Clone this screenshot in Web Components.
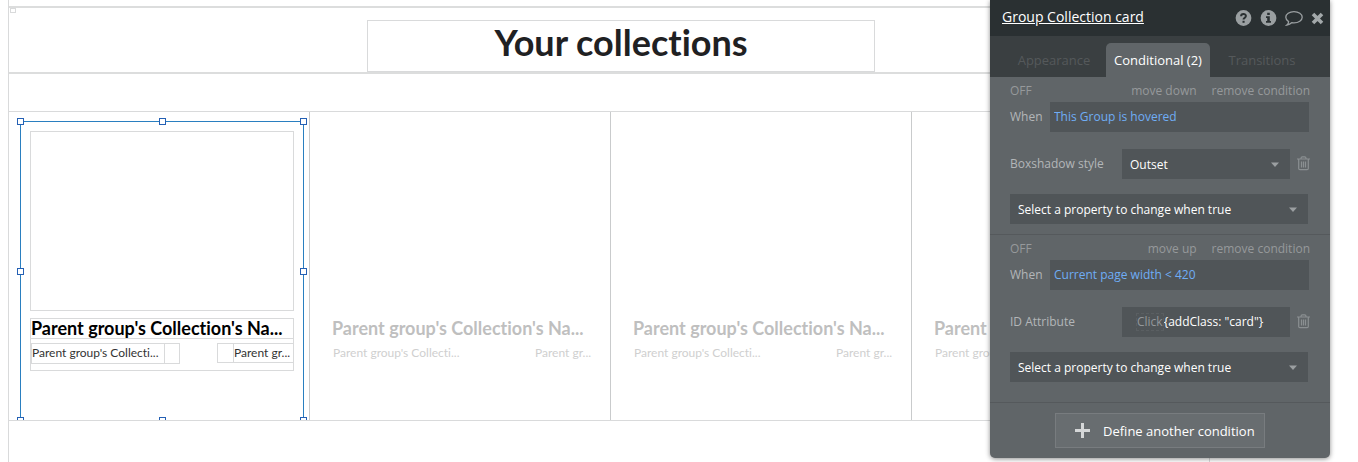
<!DOCTYPE html>
<html lang="en">
<head>
<meta charset="utf-8">
<title>Your collections – editor</title>
<style>
  html, body { margin: 0; height: 100%; }
  body { background: #fff; font-family: "Open Sans", sans-serif; font-variant-ligatures: none; overflow: hidden; }
</style>
</head>
<body>
<editor-app></editor-app>

<script>
const define = (name, html, init) => {
  const template = document.createElement('template');
  template.innerHTML = '<style>*{box-sizing:border-box}</style>' + html;
  customElements.define(name, class extends HTMLElement {
    constructor() {
      super();
      this.attachShadow({ mode: 'open' }).append(template.content.cloneNode(true));
    }
    connectedCallback() { if (init) init(this, this.shadowRoot); }
  });
};

/* One repeating-group cell with its card */
define('collection-card', `
  <style>
    :host { display: block; box-sizing: border-box; border-right: 1px solid #c9cbcc; padding: 19px 15px 0 21px; font-family: Lato, sans-serif; position: relative; }
    .image { height: 180px; border: 1px solid transparent; }
    .info { margin-top: 7px; height: 53px; border: 1px solid transparent; }
    h2 { margin: 0; height: 20px; border-bottom: 1px solid transparent; font-size: 18px; line-height: 19px; font-weight: 700; color: #bfbfbf; white-space: nowrap; }
    .row { display: flex; justify-content: space-between; margin-top: 4px; }
    .pair { display: flex; height: 21px; border: 1px solid transparent; }
    .pair.end { height: 20px; border-right: 0; }
    .text { font-size: 12px; line-height: 18px; color: #cfcfcf; white-space: nowrap; }
    .pair .text.wide { width: 133px; border-right: 1px solid transparent; }
    .pair .text.narrow { width: 60px; border-left: 1px solid transparent; }
    .icon { width: 14px; }
    .end .icon { width: 15px; }
    .frame { display: none; }
    :host([selected]) { padding-left: 21px; }
    :host([selected]) :is(.image, .info, h2, .pair, .text.wide, .text.narrow) { border-color: #d9dadb; }
    :host([selected]) h2 { color: #000; }
    :host([selected]) .text { color: #333; }
    :host([selected]) .frame { display: grid; grid-template-columns: 7px 1fr 7px 1fr 7px; grid-template-rows: 7px 1fr 7px 1fr 7px; position: absolute; inset: 6px 2px -4px 8px; }
    .outline { grid-area: 1 / 1 / 6 / 6; margin: 3px; border: 1px solid #2a7fc0; }
    .handle { width: 7px; height: 7px; background: #fff; border: 1px solid #2460b4; }
    .nw { grid-area: 1 / 1; } .n { grid-area: 1 / 3; } .ne { grid-area: 1 / 5; }
    .w { grid-area: 3 / 1; } .e { grid-area: 3 / 5; }
    .sw { grid-area: 5 / 1; } .s { grid-area: 5 / 3; } .se { grid-area: 5 / 5; }
  </style>
  <div class="image"></div>
  <div class="info">
    <h2>Parent group's Collection's Na...</h2>
    <div class="row">
      <div class="pair"><div class="text wide">Parent group's Collecti...</div><div class="icon"></div></div>
      <div class="pair end"><div class="icon"></div><div class="text narrow">Parent gr...</div></div>
    </div>
  </div>
  <div class="frame">
    <i class="outline"></i>
    <i class="handle nw"></i><i class="handle n"></i><i class="handle ne"></i>
    <i class="handle w"></i><i class="handle e"></i>
    <i class="handle sw"></i><i class="handle s"></i><i class="handle se"></i>
  </div>`);

define('design-canvas', `
  <style>
    :host { display: flex; flex-direction: column; min-height: 100vh; border: solid #d9dadb; border-width: 0 1px; box-sizing: border-box; }
    header { margin-top: 6px; height: 68px; border: solid #dcdddd; border-width: 2px 0; display: flex; }
    .marker { width: 6px; height: 5px; margin-left: 1px; border: 1px solid #d9dadb; flex: none; }
    .holder { flex: 1; display: flex; justify-content: center; padding: 12px 0 0 17px; }
    h1 { margin: 0; width: 508px; height: 52px; border: 1px solid #d9dadb; text-align: center; font-family: Lato, sans-serif; font-size: 36px; line-height: 43px; font-weight: 700; color: #1f2123; }
    .group { margin-top: 37px; height: 310px; border: solid #d9dadb; border-width: 1px 0; display: grid; grid-template-columns: repeat(4, 301px); overflow: hidden; }
  </style>
  <header><div class="marker"></div><div class="holder"><h1>Your collections</h1></div></header>
  <section class="group">
    <collection-card selected></collection-card>
    <collection-card></collection-card>
    <collection-card></collection-card>
    <collection-card></collection-card>
  </section>`);

/* Drop-down with the editor's dark styling */
define('dark-select', `
  <style>
    :host { display: grid; height: 30px; align-items: center; background: #505558; }
    select { grid-area: 1 / 1; width: 100%; height: 30px; appearance: none; border: 0; padding: 2px 24px 0 8px; background: none; color: #fff; font: 12px/28px "Open Sans", sans-serif; outline: 0; }
    svg { grid-area: 1 / 1; justify-self: end; margin-right: 11px; pointer-events: none; }
  </style>
  <select><option></option></select>
  <svg width="8" height="5" viewBox="0 0 8 5"><path d="M0 .5h8L4 5z" fill="#9b9fa1"/></svg>`,
  (host, root) => {
    root.querySelector('option').textContent = host.getAttribute('value');
    root.querySelector('select').setAttribute('aria-label', host.getAttribute('label') || host.getAttribute('value'));
  });

define('trash-button', `
  <style>
    :host { display: block; }
    button { display: block; border: 0; background: none; padding: 0; }
    svg { display: block; }
  </style>
  <button aria-label="Remove property"><svg width="13" height="15" viewBox="0 0 13 15" fill="none" stroke="#8b9092" stroke-width="1.200">
    <path d="M0 3h13M4 3V2.200Q4 .8 5.400.8H7.600Q9 .8 9 2.200V3M1.700 3.500V12.500q0 1.200 1.200 1.200h7.200q1.200 0 1.200-1.200V3.500M4.500 5.500v6M6.500 5.500v6M8.500 5.500v6"/>
  </svg></button>`);

define('condition-block', `
  <style>
    :host { display: block; padding: 0 20px 10px; border-bottom: 1px solid #55595c; color: #b3b6b8; font-size: 12px; }
    .meta { display: flex; height: 25px; padding-top: 2px; line-height: 24px; color: #96999b; }
    .meta span { flex: 1; }
    button { border: 0; background: none; padding: 0; margin-left: 15px; font: inherit; color: inherit; }
    .when { display: grid; grid-template-columns: 40px 1fr; align-items: center; margin-right: 1px; }
    label { padding-bottom: 2px; }
    input { width: 100%; min-width: 0; border: 0; outline: 0; font: 12px "Open Sans", sans-serif; }
    .when input { height: 30px; padding: 0 4px 2px; background: #505558; color: #6fadf5; }
    ::slotted([slot=property]) { margin-top: 17px; }
    ::slotted([slot=next]) { margin-top: 15px; margin-right: 2px; }
  </style>
  <div class="meta"><span>OFF</span><button class="move"></button><button>remove condition</button></div>
  <div class="when"><label for="expr">When</label><input id="expr"></div>
  <slot name="property"></slot>
  <slot name="next"></slot>`,
  (host, root) => {
    root.querySelector('.move').textContent = host.getAttribute('move');
    root.querySelector('input').value = host.getAttribute('when');
  });

define('property-row', `
  <style>
    :host { display: grid; grid-template-columns: 112px minmax(0, 1fr) 13px; align-items: center; height: 30px; color: #b3b6b8; font-size: 12px; }
    .name, trash-button { padding-bottom: 2px; }
    ::slotted(*) { margin-right: 7px; }
  </style>
  <span class="name"></span><slot></slot><trash-button></trash-button>`,
  (host, root) => { root.querySelector('.name').textContent = host.getAttribute('name'); });

define('text-expression', `
  <style>
    :host { display: flex; align-items: center; height: 30px; background: #505558; padding: 0 7px 0 14px; box-sizing: border-box; }
    .chip { flex: none; border: 1px dashed #5a5f62; color: #93979a; font-size: 12px; line-height: 16px; height: 18px; }
    input { flex: 1; width: 0; min-width: 0; height: 18px; border: 0; outline: 0; padding: 0; background: none; color: #fff; font: 12px/18px "Open Sans", sans-serif; }
  </style>
  <span class="chip">Click</span><input aria-label="ID Attribute" value='{addClass: "card"}'>`);

define('property-panel', `
  <style>
    :host { display: block; width: 340px; background: #606568; border-radius: 0 0 5px 5px; box-shadow: 0 1px 5px rgba(0,0,0,.45); color: #fff; overflow: hidden; }
    header { height: 36px; background: #2a3032; display: flex; align-items: center; padding: 0 6px 0 12px; }
    h2 { margin: 0; flex: 1; padding-bottom: 2px; font-size: 14px; line-height: 20px; font-weight: 400; }
    a { color: #fff; }
    .tools { display: flex; align-items: center; gap: 8px; }
    button { border: 0; padding: 0; background: none; font: inherit; color: inherit; }
    .tools button, .tools svg { display: block; }
    nav { height: 41px; background: #3a3f41; display: grid; grid-template-columns: 116px 104px 120px; align-items: end; }
    nav button { height: 34px; font-size: 13px; color: #55595b; }
    nav button:first-child { padding-left: 12px; }
    nav button:last-child { padding-right: 16px; }
    nav .active { background: #606568; color: #fff; border-radius: 5px 5px 0 0; font-size: 13px; }
    condition-block:last-of-type { padding-bottom: 20px; }
    footer { padding: 10px 65px; }
    footer button { width: 210px; height: 35px; display: flex; align-items: center; gap: 13px; padding-left: 19px; background: #686d70; border: 1px solid #787c7f; font-size: 13px; white-space: nowrap; }
  </style>
  <header>
    <h2><a href="#card">Group Collection card</a></h2>
    <div class="tools">
      <button aria-label="Help"><svg width="17" height="16" viewBox="0 0 16 16"><circle cx="8" cy="8" r="7.900" fill="#9a9fa1"/><path d="M5.600 6.300C5.600 3.300 10.400 3.300 10.400 6.100C10.400 7.900 8 7.800 8 9.500" fill="none" stroke="#2a3032" stroke-width="2"/><path d="M7 10.800h2.100v2H7z" fill="#2a3032"/></svg></button>
      <button aria-label="Information"><svg width="17" height="16" viewBox="0 0 16 16"><circle cx="8" cy="8" r="7.900" fill="#9a9fa1"/><path d="M6.700 2.700h2.600v2.200H6.700zM5.500 6.200h3.800v4.800h1.200v1.700h-5V11h1.200V7.900H5.500z" fill="#2a3032"/></svg></button>
      <button aria-label="Comments"><svg width="18" height="16" viewBox="0 0 18 16"><path d="M9 1.600c4.600 0 8.200 2.500 8.200 5.600s-3.600 5.600-8.200 5.600q-1.100 0-2-.2Q4.800 14.600 1.900 15q1.800-1.500 1.700-3.400C1.900 10.500.8 9 .8 7.200c0-3.100 3.600-5.600 8.200-5.600z" fill="none" stroke="#9a9fa1" stroke-width="1.300"/></svg></button>
      <button aria-label="Close"><svg width="13" height="13" viewBox="0 0 13 13"><path d="M2 2l9 9M11 2l-9 9" stroke="#a3a8aa" stroke-width="3.600"/></svg></button>
    </div>
  </header>
  <nav><button>Appearance</button><button class="active">Conditional (2)</button><button>Transitions</button></nav>
  <condition-block move="move down" when="This Group is hovered">
    <property-row slot="property" name="Boxshadow style"><dark-select value="Outset" label="Boxshadow style"></dark-select></property-row>
    <dark-select slot="next" value="Select a property to change when true"></dark-select>
  </condition-block>
  <condition-block move="move up" when="Current page width &lt; 420">
    <property-row slot="property" name="ID Attribute"><text-expression></text-expression></property-row>
    <dark-select slot="next" value="Select a property to change when true"></dark-select>
  </condition-block>
  <footer><button><svg width="15" height="15" viewBox="0 0 15 15"><path d="M7.500 0v15M0 7.500h15" stroke="#d5d7d8" stroke-width="3"/></svg><span>Define another condition</span></button></footer>`);

define('editor-app', `
  <style>
    :host { display: block; position: relative; min-height: 100vh; overflow: hidden; }
    design-canvas { margin: 0 148px 0 8px; }
    property-panel { position: absolute; top: 0; right: 28px; }
  </style>
  <design-canvas></design-canvas>
  <property-panel></property-panel>`);
</script>
</body>
</html>
